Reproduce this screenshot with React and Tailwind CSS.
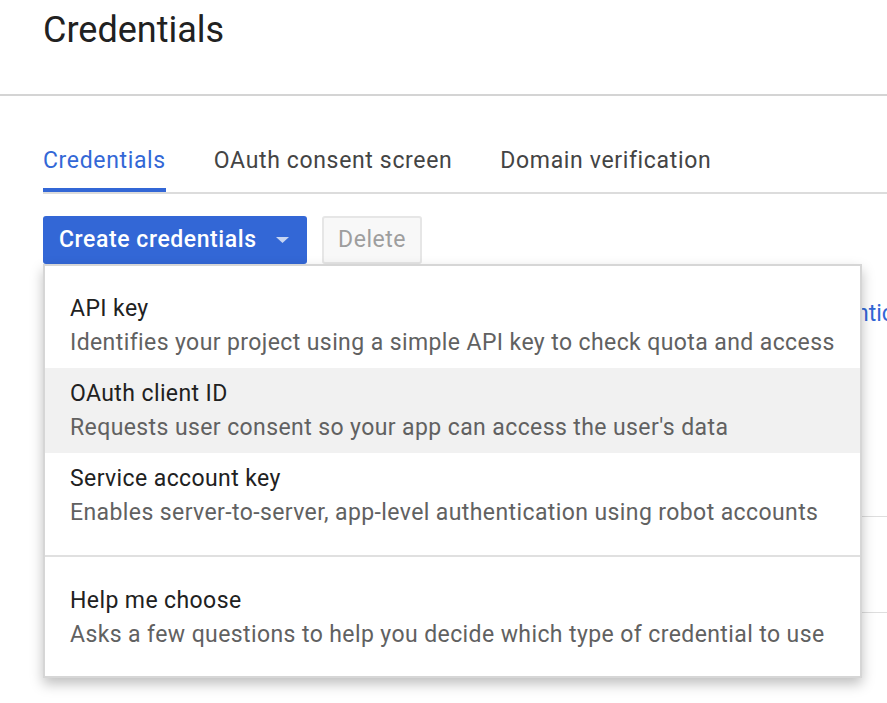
const ITEMS = [
  { title: 'API key', desc: 'Identifies your project using a simple API key to check quota and access' },
  { title: 'OAuth client ID', desc: "Requests user consent so your app can access the user's data", active: true },
  { title: 'Service account key', desc: 'Enables server-to-server, app-level authentication using robot accounts' },
];

const TABS = ['Credentials', 'OAuth consent screen', 'Domain verification'];

function MenuItem({ title, desc, active }) {
  return (
    <div className={`px-[25px] pt-[9px] pb-[8px] whitespace-nowrap tracking-[0.4px] ${active ? 'bg-[#f1f1f1]' : 'bg-white'}`}>
      <div className="text-[23px] leading-[34px] text-[#212121]">{title}</div>
      <div className="text-[23px] leading-[34px] text-[#616161]">{desc}</div>
    </div>
  );
}

export default function App() {
  return (
    <div className="relative w-[887px] h-[703px] overflow-hidden bg-white font-['Roboto',sans-serif]">
      <div className="h-[96px] border-b-2 border-[#d4d4d4] pl-[43px] pt-[8px]">
        <h1 className="text-[36px] leading-[44px] text-[#212121]">Credentials</h1>
      </div>

      <div className="pl-[43px]">
        <div className="mt-[36px] flex gap-[48px] border-b-2 border-[#dcdcdc]">
          {TABS.map((tab, i) => (
            <div
              key={tab}
              className={`h-[60px] pt-[15px] text-[23px] leading-[28px] tracking-[0.65px] border-b-4 ${
                i === 0 ? 'text-[#3367d6] border-[#3367d6]' : 'text-[#444] border-transparent'
              }`}
            >
              {tab}
            </div>
          ))}
        </div>

        <div className="mt-[22px] flex gap-[15px]">
          <button className="flex h-[48px] w-[264px] items-center rounded-[3px] bg-[#3367d6] pl-[16px] text-[23px] font-medium tracking-[0.57px] text-white">
            Create credentials
            <svg className="ml-[19px]" width="13" height="6" viewBox="0 0 13 6">
              <path d="M0 0h13L6.5 6z" fill="#c7d5f2" />
            </svg>
          </button>
          <button className="h-[48px] w-[100px] rounded-[3px] border-2 border-[#e6e6e6] bg-[#f8f8f8] text-[23px] tracking-[0.5px] text-[#9e9e9e]">
            Delete
          </button>
        </div>

        <div className="mt-[33px] w-[844px] overflow-hidden">
          <div className="ml-[753px] whitespace-nowrap text-[23px] text-[#3367d6]">Authentication</div>
        </div>
        <div className="mt-[184px] ml-[800px] border-t border-[#dedede]" />
        <div className="mt-[95px] ml-[800px] border-t border-[#dedede]" />
      </div>

      <div className="absolute left-[43px] top-[264px] w-[819px] border-2 border-[#d6d6d6] bg-white shadow-[0_6px_12px_rgba(0,0,0,0.25)]">
        <div className="pt-[17px] pb-[17px]">
          {ITEMS.map((item) => (
            <MenuItem key={item.title} {...item} />
          ))}
        </div>
        <div className="border-t-2 border-[#e0e0e0] pt-[18px] pb-[16px]">
          <MenuItem
            title="Help me choose"
            desc="Asks a few questions to help you decide which type of credential to use"
          />
        </div>
      </div>
    </div>
  );
}
